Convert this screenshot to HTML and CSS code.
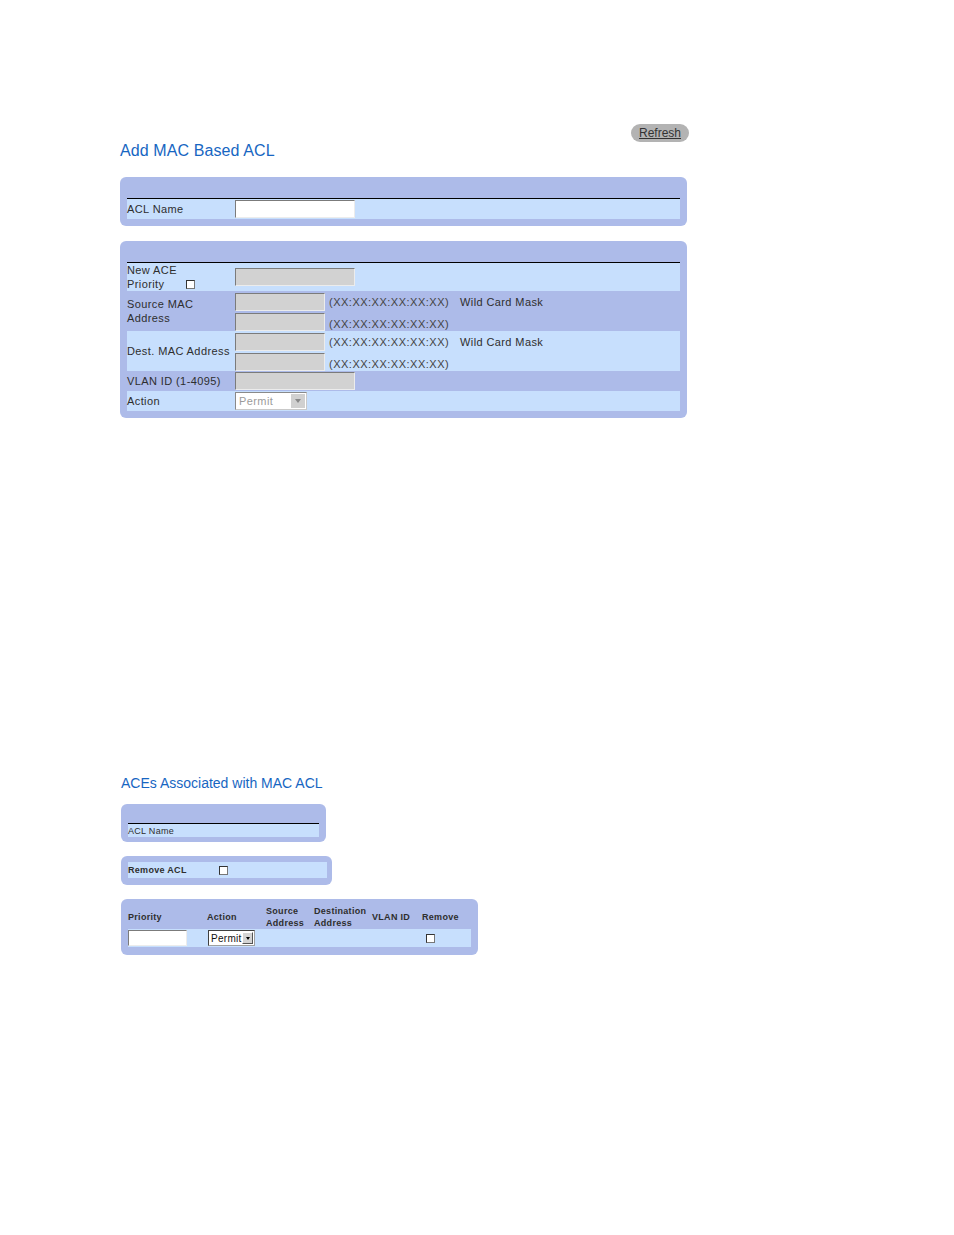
FILE: index.html
```html
<!DOCTYPE html>
<html lang="en">
<head>
  <meta charset="UTF-8">
  <title>Add MAC Based ACL</title>
  <link rel="stylesheet" href="styles.css">
</head>
<body>

<div class="page">

  <div class="toolbar">
    <a href="#" class="btn-refresh">Refresh</a>
  </div>

  <h1 class="page-title">Add MAC Based ACL</h1>

  <!-- ACL name -->
  <div class="panel panel-first">
    <table class="form">
      <tr class="alt row-20">
        <td class="lbl">ACL Name</td>
        <td><input type="text" class="field field-wide field-on"></td>
      </tr>
    </table>
  </div>

  <!-- New ACE -->
  <div class="panel">
    <table class="form">
      <tr class="alt row-28">
        <td class="lbl">New ACE<br>Priority <input type="checkbox" class="check check-priority"></td>
        <td><input type="text" class="field field-wide" disabled></td>
      </tr>
      <tr class="row-40">
        <td class="lbl">Source MAC<br>Address</td>
        <td class="mac-cell">
          <div class="mac-line">
            <input type="text" class="field field-mac" disabled>
            <span class="hint">(XX:XX:XX:XX:XX:XX)</span>
            <span>Wild Card Mask</span>
          </div>
          <div class="mac-line">
            <input type="text" class="field field-mac" disabled>
            <span class="hint hint-low">(XX:XX:XX:XX:XX:XX)</span>
          </div>
        </td>
      </tr>
      <tr class="alt row-40">
        <td class="lbl">Dest. MAC Address</td>
        <td class="mac-cell">
          <div class="mac-line">
            <input type="text" class="field field-mac" disabled>
            <span class="hint">(XX:XX:XX:XX:XX:XX)</span>
            <span>Wild Card Mask</span>
          </div>
          <div class="mac-line">
            <input type="text" class="field field-mac" disabled>
            <span class="hint hint-low">(XX:XX:XX:XX:XX:XX)</span>
          </div>
        </td>
      </tr>
      <tr class="row-20">
        <td class="lbl">VLAN ID (1-4095)</td>
        <td><input type="text" class="field field-wide" disabled></td>
      </tr>
      <tr class="alt row-20">
        <td class="lbl">Action</td>
        <td>
          <span class="select select-off">
            <span class="select-text">Permit</span>
            <span class="select-arrow"></span>
          </span>
        </td>
      </tr>
    </table>
  </div>

  <div class="section">
    <h2 class="section-title">ACEs Associated with MAC ACL</h2>

    <div class="panel panel-name">
      <table class="grid grid-lined">
        <tr class="alt row-13">
          <td>ACL Name</td>
        </tr>
      </table>
    </div>

    <div class="panel panel-remove">
      <table class="grid">
        <tr class="alt row-16">
          <td class="remove-lbl"><b>Remove ACL</b></td>
          <td><input type="checkbox" class="check"></td>
        </tr>
      </table>
    </div>

    <div class="panel panel-aces">
      <table class="grid aces">
        <tr class="row-24 head">
          <th class="col-priority">Priority</th>
          <th class="col-action">Action</th>
          <th class="col-src">Source<br>Address</th>
          <th class="col-dst">Destination<br>Address</th>
          <th class="col-vlan">VLAN ID</th>
          <th class="col-remove">Remove</th>
        </tr>
        <tr class="alt row-18">
          <td><input type="text" class="field field-priority field-on"></td>
          <td>
            <span class="select select-sm">
              <span class="select-text">Permit</span>
              <span class="select-arrow"></span>
            </span>
          </td>
          <td></td>
          <td></td>
          <td></td>
          <td class="cell-remove"><input type="checkbox" class="check"></td>
        </tr>
      </table>
    </div>
  </div>

</div>

</body>
</html>
```

FILE: styles.css
```css
body {
  margin: 0;
  font-family: "Liberation Sans", Arial, sans-serif;
  color: #2e2e2e;
  background: #fff;
}

.page {
  padding: 124px 0 40px 120px;
}

/* top bar */
.toolbar {
  width: 569px;
  display: flex;
  justify-content: flex-end;
}

.btn-refresh {
  display: block;
  width: 58px;
  height: 18px;
  border-radius: 9px;
  background: #b3b3b3;
  color: #333;
  font-size: 12px;
  line-height: 18px;
  text-align: center;
  text-decoration: underline;
}

.page-title {
  margin: 0;
  font-size: 16px;
  line-height: 18px;
  font-weight: normal;
  letter-spacing: 0.1px;
  color: #1766c2;
}

/* blue panels */
.panel {
  background: #adbbe9;
  border-radius: 6px;
  width: 553px;
  margin-top: 15px;
  padding: 21px 7px 7px;
}

.panel-first {
  margin-top: 17px;
}

.alt {
  background: #c7dffd;
}

.form {
  width: 100%;
  border-collapse: collapse;
  border-top: 1px solid #000;
  font-size: 11px;
  letter-spacing: 0.4px;
}

.form td {
  padding: 0;
  vertical-align: middle;
}

.form .lbl {
  width: 108px;
  line-height: 14px;
}

.row-13 td { height: 13px; }
.row-16 td { height: 16px; }
.row-18 td { height: 18px; }
.row-20 td { height: 20px; }
.row-24 th { height: 24px; }
.row-28 td { height: 28px; }
.row-40 td { height: 40px; }

/* text inputs */
.field {
  display: block;
  box-sizing: border-box;
  height: 18px;
  margin: 0;
  padding: 0 2px;
  border: 1px solid;
  border-color: #7b7b7b #ececec #ececec #7b7b7b;
  background: #d2d2d2;
  font: 11px "Liberation Sans", Arial, sans-serif;
}

.field-on {
  background: #fff;
}

.field-wide {
  width: 120px;
}

.field-mac {
  width: 90px;
}

.row-40 td.mac-cell {
  height: 39px;
  padding-top: 1px;
}

.mac-line {
  display: flex;
  align-items: center;
  height: 18px;
}

.mac-line + .mac-line {
  margin-top: 2px;
}

.hint {
  width: 131px;
  padding-left: 4px;
  padding-top: 1px;
  letter-spacing: 0.5px;
  color: #444;
}

.hint-low {
  padding-top: 4px;
}

/* checkboxes */
.check {
  appearance: none;
  -webkit-appearance: none;
  display: inline-block;
  width: 9px;
  height: 9px;
  margin: 0;
  border: 1px solid;
  border-color: #333 #777 #777 #333;
  background: #fff;
  vertical-align: middle;
}

.check-priority {
  margin-left: 18px;
  position: relative;
  top: -1px;
}

/* drop-down boxes */
.select {
  display: flex;
  align-items: center;
  box-sizing: border-box;
  width: 72px;
  height: 18px;
  border: 1px solid;
  background: #fff;
}

.select-text {
  flex: 1;
  padding-left: 3px;
}

.select-arrow {
  display: flex;
  align-items: center;
  justify-content: center;
  box-sizing: border-box;
  width: 14px;
  height: 14px;
  margin-right: 1px;
  background: #d0d0d0;
}

.select-arrow::after {
  content: "";
  border-left: 3px solid transparent;
  border-right: 3px solid transparent;
  border-top: 4px solid #888;
}

.select-off {
  border-color: #8a8a8a #c9c9c9 #c9c9c9 #8a8a8a;
  color: #9b9b9b;
}

.select-sm {
  width: 47px;
  height: 16px;
  margin-left: 1px;
  border-color: #404040 #a0a0a0 #a0a0a0 #404040;
  font-size: 10px;
  color: #111;
}

.select-sm .select-text {
  padding-left: 2px;
}

.select-sm .select-arrow {
  width: 11px;
  height: 12px;
  border: 1px solid;
  border-color: #fff #555 #555 #fff;
  background: #d4d4d4;
}

.select-sm .select-arrow::after {
  border-left-width: 2.5px;
  border-right-width: 2.5px;
  border-top: 3px solid #000;
}

/* associated ACEs */
.section {
  margin-left: 1px;
}

.section-title {
  margin: 357px 0 0;
  font-size: 14px;
  line-height: 16px;
  font-weight: normal;
  color: #1766c2;
}

.grid {
  width: 100%;
  border-collapse: collapse;
  table-layout: fixed;
  font-size: 9px;
  letter-spacing: 0.3px;
}

.grid td,
.grid th {
  padding: 0;
  vertical-align: middle;
  text-align: left;
}

.grid-lined {
  border-top: 1px solid #000;
}

.panel-name {
  width: 191px;
  margin-top: 13px;
  padding: 19px 7px 5px;
}

.panel-remove {
  width: 199px;
  margin-top: 14px;
  padding: 6px 5px 7px 7px;
}

.remove-lbl {
  width: 91px;
}

.panel-aces {
  width: 343px;
  margin-top: 14px;
  padding: 6px 7px 8px;
}

.aces .head th {
  line-height: 12px;
  font-weight: bold;
}

.col-priority { width: 79px; }
.col-action { width: 59px; }
.col-src { width: 48px; }
.col-dst { width: 58px; }
.col-vlan { width: 50px; }
.col-remove { width: 49px; }

.grid td.cell-remove {
  padding-left: 4px;
}

.field-priority {
  width: 59px;
  height: 16px;
}
```
